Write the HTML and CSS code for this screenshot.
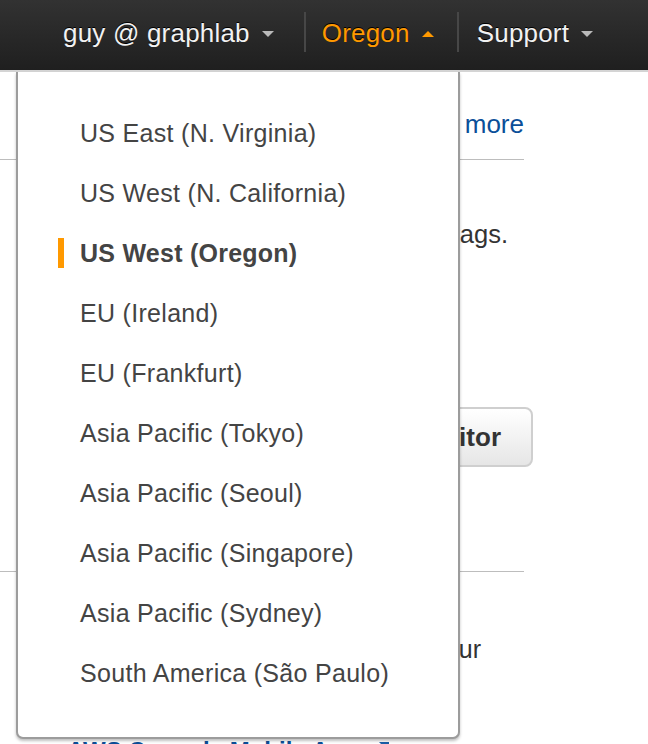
FILE: index.html
```html
<!DOCTYPE html>
<html lang="en">
<head>
<meta charset="utf-8">
<title>Region menu</title>
<link rel="stylesheet" href="styles.css">
</head>
<body>
<header class="topbar">
  <nav class="nav">
    <div class="nav-item user">
      <span class="nav-label">guy @ graphlab</span>
      <svg class="caret" width="14" height="8" viewBox="0 0 14 8"><path d="M1 1 L13 1 L7 7 Z" fill="#b9b9b9"/></svg>
    </div>
    <span class="nav-sep"></span>
    <div class="nav-item active">
      <span class="nav-label">Oregon</span>
      <svg class="caret" width="14" height="8" viewBox="0 0 14 8"><path d="M1 7 L13 7 L7 1 Z" fill="#ff9900"/></svg>
    </div>
    <span class="nav-sep"></span>
    <div class="nav-item support">
      <span class="nav-label">Support</span>
      <svg class="caret" width="14" height="8" viewBox="0 0 14 8"><path d="M1 1 L13 1 L7 7 Z" fill="#b9b9b9"/></svg>
    </div>
  </nav>
</header>

<main class="page">
  <div class="content">
    <p class="line right first"><a class="link" href="#">Learn more</a></p>
    <hr class="rule">
    <p class="line right text-end">Organize resources with tags.</p>
    <div class="btn-row"><button class="btn">Open Tag Editor</button></div>
    <hr class="rule rule-2">
    <p class="line right text-end2">Manage resources on the go with your</p>
    <p class="line mobile"><a class="link bold" href="#">AWS Console Mobile App</a>
      <svg class="ext" width="20" height="20" viewBox="0 0 20 20"><rect x="1" y="5" width="12" height="12" fill="none" stroke="#9ab" stroke-width="2"/><path d="M9 1 H19 V11 Z" fill="#1a5fa8"/></svg>
    </p>
  </div>

  <div class="region-menu">
    <ul class="region-list">
      <li class="region">US East (N. Virginia)</li>
      <li class="region">US West (N. California)</li>
      <li class="region selected">US West (Oregon)</li>
      <li class="region">EU (Ireland)</li>
      <li class="region">EU (Frankfurt)</li>
      <li class="region">Asia Pacific (Tokyo)</li>
      <li class="region">Asia Pacific (Seoul)</li>
      <li class="region">Asia Pacific (Singapore)</li>
      <li class="region">Asia Pacific (Sydney)</li>
      <li class="region">South America (São Paulo)</li>
    </ul>
  </div>
</main>
</body>
</html>
```
FILE: styles.css
```css
* { box-sizing: border-box; }
html, body { margin: 0; padding: 0; background: #fff; }
body {
  font-family: "Liberation Sans", Arial, Helvetica, sans-serif;
  overflow: hidden;
  height: 744px;
}

.topbar {
  height: 72px;
  background: linear-gradient(#323232, #1f1f1f);
  border-bottom: 2px solid #d4d4d4;
}
.nav {
  display: flex;
  align-items: center;
  height: 70px;
  padding-left: 63px;
}
.nav-item {
  display: flex;
  align-items: center;
  padding: 0 22px 0 16px;
  color: #f2f2f2;
  font-size: 26px;
  letter-spacing: 0.2px;
  text-shadow: 0 -1px 0 #000;
  margin-top: -3px;
}
.nav-item.user { padding-left: 0; padding-right: 29px; }
.nav-item.support { padding-left: 18px; }
.nav-item.active { color: #ff9900; }
.caret { margin-left: 11px; margin-top: 1px; }
.nav-sep {
  width: 2px;
  height: 40px;
  margin-top: -6px;
  background: #474747;
}

.page { position: relative; }
.content { width: 533px; padding-top: 37px; }
.line {
  margin: 0;
  font-size: 24px;
  line-height: 30px;
  color: #333;
  white-space: nowrap;
}
.right { text-align: right; }
.first { padding-right: 9px; font-size: 26px; }
.link { color: #0b4f99; text-decoration: none; }
.link.bold { font-weight: bold; }
.rule {
  margin: 20px 9px 0 0;
  border: 0;
  height: 1px;
  background: #bdbdbd;
}
.text-end { margin-top: 59px; padding-right: 25px; font-size: 25.5px; }
.btn-row { margin-top: 158px; text-align: right; }
.btn {
  height: 60px;
  padding: 0 30px 0 30px;
  font-family: inherit;
  font-size: 26px;
  font-weight: bold;
  color: #333;
  background: linear-gradient(#ffffff, #e6e6e6);
  border: 2px solid #cfcfcf;
  border-radius: 8px;
}
.rule-2 { margin-top: 104px; }
.text-end2 { margin-top: 62px; padding-right: 52px; font-size: 25px; }
.mobile { margin-top: 72px; padding-left: 67px; display: flex; align-items: center; gap: 12px; }

.region-menu {
  position: absolute;
  top: 0;
  left: 16px;
  width: 444px;
  height: 667px;
  background: #fff;
  border: 2px solid #9c9c9c;
  border-top: 0;
  border-radius: 0 0 7px 7px;
  box-shadow: 0 2px 3px rgba(0, 0, 0, 0.25);
}
.region-list {
  list-style: none;
  margin: 0;
  padding: 31px 0 0 0;
}
.region {
  position: relative;
  height: 60px;
  line-height: 60px;
  padding-left: 62px;
  font-size: 25px;
  letter-spacing: 0.3px;
  color: #444;
}
.region.selected { font-weight: bold; letter-spacing: 0.25px; }
.region.selected::before {
  content: "";
  position: absolute;
  left: 40px;
  top: 15px;
  width: 6px;
  height: 30px;
  background: #ff9900;
}
```
